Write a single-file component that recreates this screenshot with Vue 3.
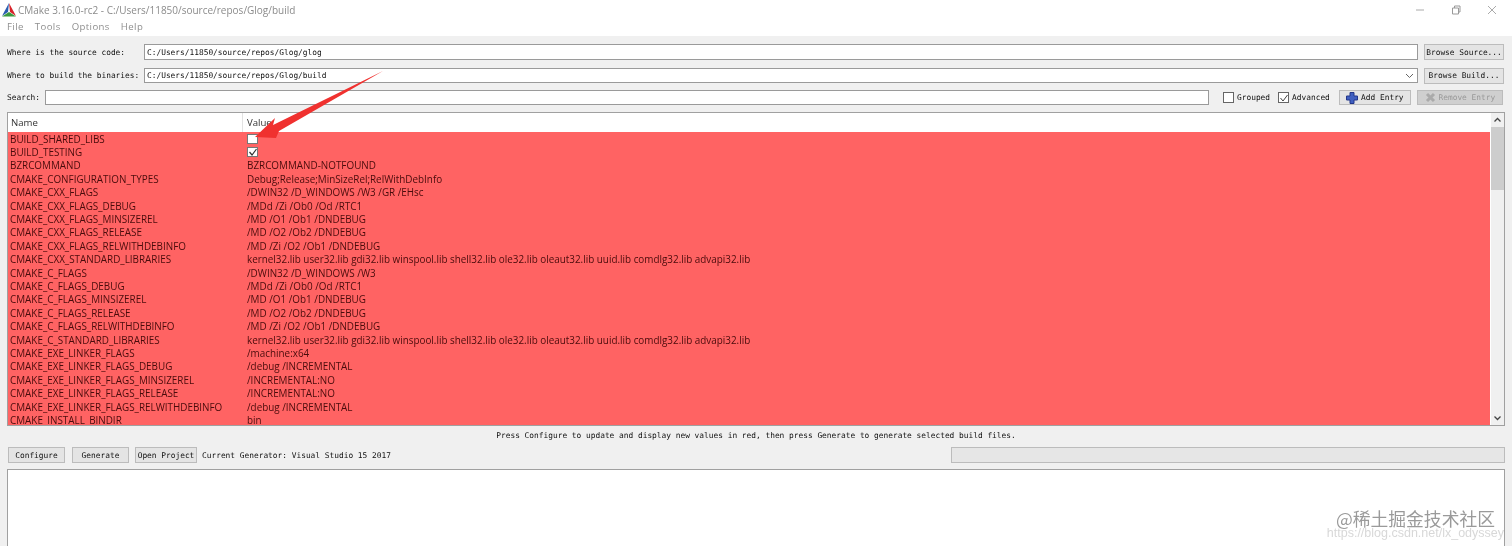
<script setup>
const rows = [
  ['BUILD_SHARED_LIBS', 'off'],
  ['BUILD_TESTING', 'on'],
  ['BZRCOMMAND', 'BZRCOMMAND-NOTFOUND'],
  ['CMAKE_CONFIGURATION_TYPES', 'Debug;Release;MinSizeRel;RelWithDebInfo'],
  ['CMAKE_CXX_FLAGS', '/DWIN32 /D_WINDOWS /W3 /GR /EHsc'],
  ['CMAKE_CXX_FLAGS_DEBUG', '/MDd /Zi /Ob0 /Od /RTC1'],
  ['CMAKE_CXX_FLAGS_MINSIZEREL', '/MD /O1 /Ob1 /DNDEBUG'],
  ['CMAKE_CXX_FLAGS_RELEASE', '/MD /O2 /Ob2 /DNDEBUG'],
  ['CMAKE_CXX_FLAGS_RELWITHDEBINFO', '/MD /Zi /O2 /Ob1 /DNDEBUG'],
  ['CMAKE_CXX_STANDARD_LIBRARIES', 'kernel32.lib user32.lib gdi32.lib winspool.lib shell32.lib ole32.lib oleaut32.lib uuid.lib comdlg32.lib advapi32.lib'],
  ['CMAKE_C_FLAGS', '/DWIN32 /D_WINDOWS /W3'],
  ['CMAKE_C_FLAGS_DEBUG', '/MDd /Zi /Ob0 /Od /RTC1'],
  ['CMAKE_C_FLAGS_MINSIZEREL', '/MD /O1 /Ob1 /DNDEBUG'],
  ['CMAKE_C_FLAGS_RELEASE', '/MD /O2 /Ob2 /DNDEBUG'],
  ['CMAKE_C_FLAGS_RELWITHDEBINFO', '/MD /Zi /O2 /Ob1 /DNDEBUG'],
  ['CMAKE_C_STANDARD_LIBRARIES', 'kernel32.lib user32.lib gdi32.lib winspool.lib shell32.lib ole32.lib oleaut32.lib uuid.lib comdlg32.lib advapi32.lib'],
  ['CMAKE_EXE_LINKER_FLAGS', '/machine:x64'],
  ['CMAKE_EXE_LINKER_FLAGS_DEBUG', '/debug /INCREMENTAL'],
  ['CMAKE_EXE_LINKER_FLAGS_MINSIZEREL', '/INCREMENTAL:NO'],
  ['CMAKE_EXE_LINKER_FLAGS_RELEASE', '/INCREMENTAL:NO'],
  ['CMAKE_EXE_LINKER_FLAGS_RELWITHDEBINFO', '/debug /INCREMENTAL'],
  ['CMAKE_INSTALL_BINDIR', 'bin'],
]
</script>

<template>
  <div class="window">
    <div class="titlebar">
      <svg class="logo" viewBox="0 0 14 14" width="14" height="14">
        <polygon points="7,0 0,13 6,9" fill="#2a5db0" />
        <polygon points="7,0 14,13 8,9" fill="#d8232a" />
        <polygon points="0,13.5 14,13.5 7,9" fill="#3a9a3f" />
      </svg>
      <span class="title">CMake 3.16.0-rc2 - C:/Users/11850/source/repos/Glog/build</span>
      <div class="winctl">
        <svg width="10" height="10" viewBox="0 0 10 10"><path d="M1 5h8" stroke="#aaa" fill="none" /></svg>
        <svg width="10" height="10" viewBox="0 0 10 10"><path d="M1.500 3h6v6h-6zM3.500 3V1h5.500v6h-1.500" stroke="#999" fill="none" /></svg>
        <svg width="10" height="10" viewBox="0 0 10 10"><path d="M1 1l8 8M9 1l-8 8" stroke="#aaa" fill="none" /></svg>
      </div>
    </div>
    <div class="menubar">
      <span>File</span><span>Tools</span><span>Options</span><span>Help</span>
    </div>

    <div class="body">
      <div class="form-row source-row">
        <label class="lbl">Where is the source code:</label>
        <div class="input source-input">C:/Users/11850/source/repos/Glog/glog</div>
        <button class="btn browse">Browse Source...</button>
      </div>
      <div class="form-row build-row">
        <label class="lbl">Where to build the binaries:</label>
        <div class="input build-input">C:/Users/11850/source/repos/Glog/build
          <svg class="chev" width="9" height="6" viewBox="0 0 9 6"><path d="M1 1l3.500 3.500L8 1" stroke="#666" fill="none" /></svg>
        </div>
        <button class="btn browse">Browse Build...</button>
      </div>
      <div class="form-row search-row">
        <label class="lbl search-lbl">Search:</label>
        <div class="input search-input"></div>
        <div class="opts">
          <span class="opt"><span class="cb"></span>Grouped</span>
          <span class="opt adv">
            <span class="cb">
              <svg width="10" height="10" viewBox="0 0 10 10"><path d="M1.500 5l2.500 3 4.500-6" stroke="#444" fill="none" /></svg>
            </span>Advanced
          </span>
          <button class="btn entry">
            <svg width="12" height="12" viewBox="0 0 12 12"><path d="M4 0.500h4v3.500h3.500v4H8v3.500H4V8H0.500V4H4z" fill="#3f5fc0" stroke="#23378a" /></svg>Add Entry
          </button>
          <button class="btn entry disabled">
            <svg width="11" height="11" viewBox="0 0 11 11"><path d="M2 2l7 7M9 2l-7 7" stroke="#aaa" stroke-width="3" fill="none" /></svg>Remove Entry
          </button>
        </div>
      </div>

      <div class="table">
        <div class="tmain">
          <div class="thead">
            <span class="col-name">Name</span>
            <span class="col-value">Value</span>
          </div>
          <div class="tbody">
            <div v-for="row in rows" :key="row[0]" class="trow">
              <span class="cell-name">{{ row[0] }}</span>
              <span v-if="row[1] === 'off'" class="cell-cb"></span>
              <span v-else-if="row[1] === 'on'" class="cell-cb">
                <svg width="10" height="10" viewBox="0 0 10 10"><path d="M1.500 5l2.500 3 4.500-6" stroke="#333" stroke-width="1.200" fill="none" /></svg>
              </span>
              <span v-else class="cell-value">{{ row[1] }}</span>
            </div>
          </div>
        </div>
        <div class="scroll">
          <svg width="9" height="6" viewBox="0 0 9 6"><path d="M1.500 4.500L4.500 1.500l3 3" stroke="#444" stroke-width="1.300" fill="none" /></svg>
          <div class="track"><div class="thumb"></div></div>
          <svg width="9" height="6" viewBox="0 0 9 6"><path d="M1.500 1.500l3 3 3-3" stroke="#444" stroke-width="1.300" fill="none" /></svg>
        </div>
      </div>

      <div class="hint">Press Configure to update and display new values in red, then press Generate to generate selected build files.</div>

      <div class="actions">
        <button class="btn act">Configure</button>
        <button class="btn act">Generate</button>
        <button class="btn open">Open Project</button>
        <span class="gen">Current Generator: Visual Studio 15 2017</span>
        <div class="progress"></div>
      </div>

      <div class="output"></div>
    </div>

    <svg class="arrow" width="150" height="80" viewBox="0 0 150 80">
      <polygon points="3,66 23,47 21,54 131,0 27,60 24,67" fill="#f0312f" />
    </svg>
    <div class="wm">
      <div class="wm-cn">@稀土掘金技术社区</div>
      <div class="wm-url">https://blog.csdn.net/lx_odyssey</div>
    </div>
  </div>
</template>

<style>
html, body { margin: 0; padding: 0; background: #f0f0f0; }
</style>

<style scoped>
.window {
  position: relative;
  width: 1512px;
  height: 546px;
  overflow: hidden;
  background: #f0f0f0;
  font-family: "DejaVu Sans Mono", "Liberation Mono", monospace;
  font-size: 7.85px;
  color: #111;
  filter: blur(0.3px);
}
.titlebar {
  height: 19px;
  background: #fff;
  display: flex;
  align-items: center;
  padding: 0 0 0 2px;
  box-sizing: border-box;
}
.logo { margin-right: 2px; flex: none; }
.title {
  font-family: "Open Sans", "Noto Sans", sans-serif;
  font-size: 10px;
  color: #8b8b8b;
}
.winctl {
  margin-left: auto;
  margin-right: 15px;
  display: flex;
  gap: 26px;
}
.menubar {
  height: 17px;
  background: #fff;
  display: flex;
  align-items: center;
  gap: 11px;
  padding: 0 0 2px 7px;
  box-sizing: border-box;
  font-family: "Open Sans", "Noto Sans", sans-serif;
  font-size: 9.6px;
  letter-spacing: 0.4px;
  color: #8f8f8f;
}
.body {
  display: flex;
  flex-direction: column;
  padding: 8px 7px 0 7px;
  height: 510px;
  box-sizing: border-box;
}
.form-row {
  display: flex;
  align-items: center;
}
.source-row { height: 16px; }
.build-row { height: 15px; margin-top: 8px; }
.search-row { height: 15px; margin-top: 7px; }
.lbl {
  width: 137px;
  flex: none;
  white-space: pre;
}
.search-lbl { width: 38px; }
.input {
  position: relative;
  flex: none;
  box-sizing: border-box;
  background: #fff;
  border: 1px solid #9a9a9a;
  padding-left: 2px;
  display: flex;
  align-items: center;
}
.source-input { width: 1274px; height: 16px; }
.build-input { width: 1274px; height: 15px; }
.search-input { width: 1164px; height: 15px; margin-right: 14px; }
.chev { position: absolute; right: 3px; top: 4px; }
.btn {
  box-sizing: border-box;
  margin: 0;
  padding: 0;
  background: #e4e4e4;
  border: 1px solid #bcbcbc;
  font: inherit;
  color: #111;
  display: flex;
  align-items: center;
  justify-content: center;
}
.browse { width: 80px; height: 16px; margin-left: 6px; }
.opts { display: flex; align-items: center; flex: none; }
.opt { display: flex; align-items: center; gap: 3px; }
.adv { margin-left: 8px; }
.cb {
  box-sizing: border-box;
  width: 11px;
  height: 11px;
  background: #fff;
  border: 1px solid #666;
  display: flex;
  align-items: center;
  justify-content: center;
}
.cb svg { flex: none; }
.entry { width: 72px; height: 15px; margin-left: 9px; gap: 3px; }
.disabled {
  width: 86px;
  margin-left: 6px;
  background: #cfcfcf;
  color: #999;
}
.table {
  margin-top: 7px;
  height: 314px;
  flex: none;
  box-sizing: border-box;
  border: 1px solid #a0a0a0;
  background: #fff;
  display: flex;
}
.tmain { flex: 1; min-width: 0; display: flex; flex-direction: column; }
.thead {
  height: 19px;
  flex: none;
  display: flex;
  align-items: center;
  font-family: "Open Sans", "Noto Sans", sans-serif;
  font-size: 9.6px;
  color: #333;
  background: #fff;
}
.col-name {
  width: 235px;
  padding-left: 3px;
  padding-bottom: 1px;
  box-sizing: border-box;
  height: 100%;
  display: flex;
  align-items: center;
  border-right: 1px solid #e2e2e2;
}
.col-value { padding-left: 4px; padding-bottom: 1px; }
.tbody {
  flex: 1;
  min-height: 0;
  overflow: hidden;
  background: #ff6363;
}
.trow {
  height: 13.4px;
  display: flex;
  align-items: center;
  font-family: "Open Sans", "Noto Sans", sans-serif;
  font-size: 9.9px;
  color: #4a0c0c;
  white-space: nowrap;
}
.cell-name { width: 239px; flex: none; padding-left: 2px; box-sizing: border-box; }
.cell-value { flex: 1; }
.cell-cb {
  box-sizing: border-box;
  width: 11px;
  height: 10px;
  background: #fff;
  border: 1px solid #777;
  display: flex;
  align-items: center;
  justify-content: center;
}
.cell-cb svg { flex: none; }
.scroll {
  width: 14px;
  flex: none;
  display: flex;
  flex-direction: column;
  align-items: center;
  background: #f0f0f0;
  padding: 4px 0;
  box-sizing: border-box;
  border-left: 1px solid #fff;
}
.track { flex: 1; width: 100%; margin: 4px 0; }
.thumb { height: 63px; background: #cdcdcd; }
.hint {
  height: 21px;
  flex: none;
  display: flex;
  align-items: center;
  justify-content: center;
  padding-bottom: 3px;
  box-sizing: border-box;
  white-space: pre;
}
.actions {
  height: 16px;
  flex: none;
  display: flex;
  align-items: center;
}
.act { width: 57px; height: 16px; margin-left: 1px; margin-right: 6px; }
.open { width: 62px; height: 16px; margin-right: 5px; }
.gen { white-space: pre; }
.progress {
  margin-left: auto;
  width: 554px;
  height: 16px;
  box-sizing: border-box;
  background: #e6e6e6;
  border: 1px solid #bcbcbc;
}
.output {
  margin-top: 6px;
  flex: 1;
  background: #fff;
  border: 1px solid #a0a0a0;
  border-bottom: none;
}
.arrow {
  position: absolute;
  left: 252px;
  top: 71px;
}
.wm {
  position: absolute;
  right: 0;
  top: 507px;
  width: 190px;
  text-align: right;
  pointer-events: none;
}
.wm-cn {
  padding-right: 17px;
  font-family: "Noto Sans CJK SC", sans-serif;
  font-size: 17.8px;
  line-height: 22px;
  color: #9a9a9a;
}
.wm-url {
  padding-right: 8px;
  font-family: "Liberation Sans", sans-serif;
  font-size: 12.5px;
  line-height: 9px;
  white-space: nowrap;
  color: #d8d8d8;
}
</style>
